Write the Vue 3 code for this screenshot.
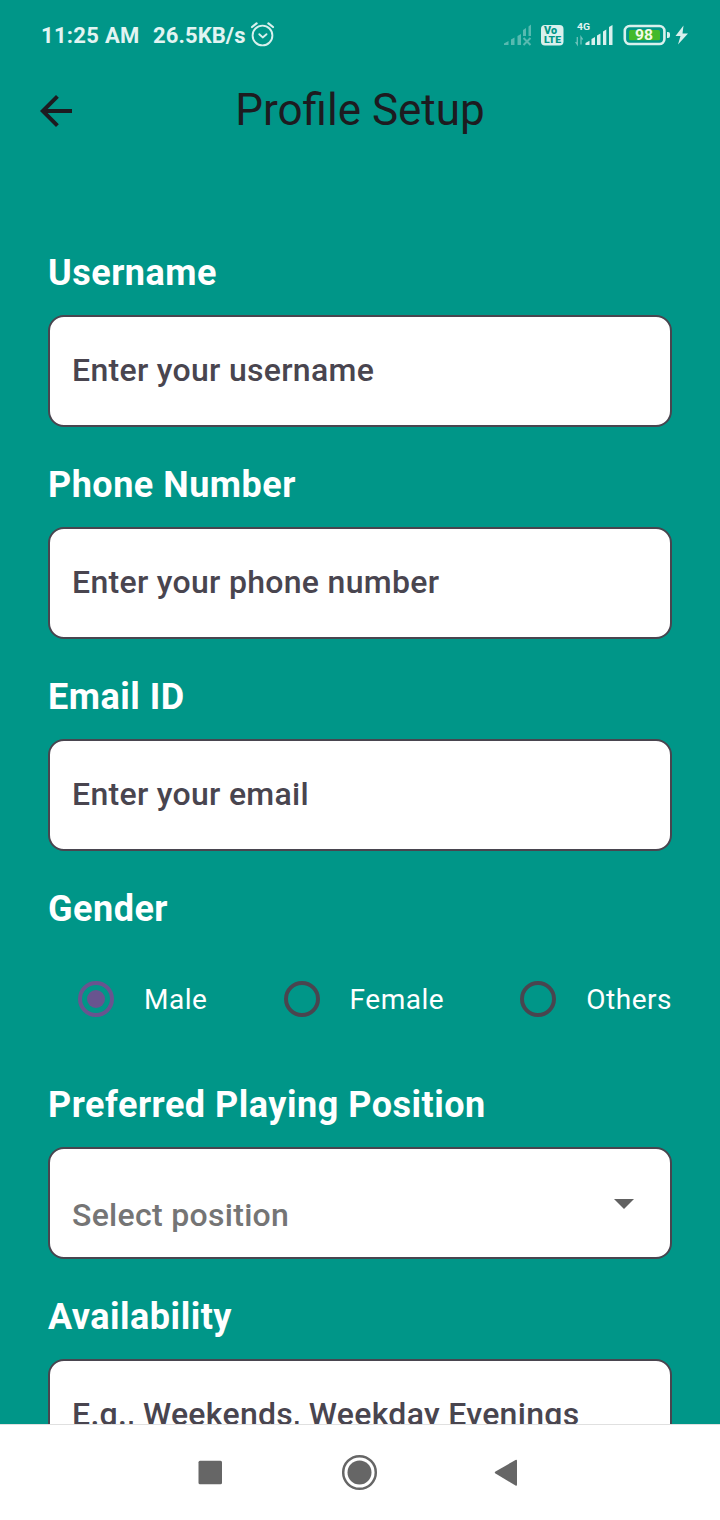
<script setup>
const fields = [
  { label: 'Username', hint: 'Enter your username' },
  { label: 'Phone Number', hint: 'Enter your phone number' },
  { label: 'Email ID', hint: 'Enter your email' },
]
const genders = ['Male', 'Female', 'Others']
const selected = 'Male'
</script>

<template>
  <div class="screen">
    <header class="status">
      <span class="clock">11:25 AM</span>
      <span class="speed">26.5KB/s</span>
      <svg class="alarm" width="26" height="26" viewBox="0 0 26 26" fill="none" stroke="#d9f0ed" stroke-width="1.9" stroke-linecap="round" stroke-linejoin="round">
        <circle cx="12.500" cy="14.500" r="9.900" />
        <path d="M9.300 13.200l3.400 3.200 3.800-3.200" />
        <path d="M2 6l4.600-3.600M23 6l-4.600-3.600" stroke-width="2.200" />
      </svg>
      <svg class="indicators" width="190" height="30" viewBox="500 20 190 30">
        <g fill="#d9f0ed" opacity=".4">
          <path d="M504 45v-1.500l4.500-2.500v4zM511 45v-5.500l3.500-2v7.500zM517.500 45v-9l3.500-2v11zM523 36v-6l3-2v8zM528.500 36v-9.500l2.500-2V36z" />
          <path d="M523.500 38l7 7M530.500 38l-7 7" stroke="#d9f0ed" stroke-width="2" />
        </g>
        <rect x="541" y="25" width="22.500" height="20.500" rx="4" fill="#d9f0ed" />
        <text x="544" y="34.200" class="vo" textLength="13" lengthAdjust="spacingAndGlyphs">Vo</text>
        <text x="544" y="43" class="lte" textLength="17" lengthAdjust="spacingAndGlyphs">LTE</text>
        <text x="577" y="30" class="net" textLength="13" lengthAdjust="spacingAndGlyphs">4G</text>
        <path d="M577.300 37v7.500l-1.700-2.500M581 44.500V37l1.700 2.500" stroke="#d9f0ed" stroke-width="1.300" fill="none" opacity=".5" />
        <path d="M585.500 45v-2l4-2.200V45zM591.500 45v-6l3.500-2v8zM597 45v-9.500l3.500-2V45zM603 45V31.500l3.300-2V45zM609 45V27l3.500-2v20z" fill="#d9f0ed" />
        <rect x="624.800" y="26" width="39.600" height="18" rx="5" fill="none" stroke="#d9f0ed" stroke-width="2.600" />
        <rect x="629" y="30" width="31" height="10.300" rx="1.500" fill="#43b92b" />
        <path d="M667 32h1q2 0 2 2v2q0 2-2 2h-1z" fill="#d9f0ed" />
        <text x="635" y="40.300" class="charge" textLength="18" lengthAdjust="spacingAndGlyphs">98</text>
        <path d="M683.500 25.500L675.500 36h5l-2.500 8.500L688 33.500h-5.500z" fill="#d9f0ed" />
      </svg>
    </header>

    <div class="appbar">
      <svg width="32" height="32" viewBox="0 0 16 16" fill="#1d1b20">
        <path d="M16 7H3.830l5.590-5.590L8 0 0 8l8 8 1.410-1.410L3.830 9H16V7z" />
      </svg>
      <h1>Profile Setup</h1>
    </div>

    <main class="form">
      <section v-for="f in fields" :key="f.label" class="field">
        <h2>{{ f.label }}</h2>
        <div class="box">{{ f.hint }}</div>
      </section>

      <section class="gender">
        <h2>Gender</h2>
        <div class="options">
          <div v-for="g in genders" :key="g" class="option">
            <span class="radio" :class="{ on: g === selected }"></span>
            <span>{{ g }}</span>
          </div>
        </div>
      </section>

      <section class="field">
        <h2>Preferred Playing Position</h2>
        <div class="box select">
          <span>Select position</span>
          <svg width="20" height="10" viewBox="0 0 20 10"><path d="M0 0h20L10 10z" fill="#616161" /></svg>
        </div>
      </section>

      <section class="field">
        <h2>Availability</h2>
        <div class="box">E.g., Weekends, Weekday Evenings</div>
      </section>
    </main>

    <nav class="navbar">
      <svg width="720" height="95" viewBox="0 1425 720 95" fill="#666">
        <rect x="198.500" y="1460.700" width="23.500" height="23.500" rx="1.500" />
        <circle cx="359.500" cy="1472.500" r="16.300" fill="none" stroke="#666" stroke-width="2.500" />
        <circle cx="359.500" cy="1472.500" r="12" />
        <path d="M495.500 1471.500L515.500 1460Q517 1459.300 517 1461V1484.500Q517 1486.200 515.500 1485.500L495.500 1473.500Q494 1472.500 495.500 1471.500z" />
      </svg>
    </nav>
  </div>
</template>

<style>
body { margin: 0; background: #009688; }
</style>

<style scoped>
.screen {
  width: 720px;
  height: 1520px;
  display: flex;
  flex-direction: column;
  overflow: hidden;
  background: #009688;
  font-family: Roboto, "Liberation Sans", sans-serif;
}
.status {
  height: 70px;
  flex: none;
  box-sizing: border-box;
  padding: 0 30px 0 41px;
  display: flex;
  align-items: center;
  color: #e2f4f2;
  font-size: 22px;
  font-weight: 700;
  white-space: nowrap;
}
.clock { width: 112px; letter-spacing: .3px; }
.speed { width: 97px; letter-spacing: .1px; }
.alarm { margin-bottom: 2px; }
.indicators { margin-left: auto; }
.vo, .lte { fill: #009688; font-weight: 900; }
.vo { font-size: 10px; }
.lte { font-size: 9.500px; }
.net { fill: #e2f4f2; font-size: 9.500px; font-weight: 700; }
.charge { fill: #f2fbe9; font-size: 15px; font-weight: 700; }
.appbar {
  height: 80px;
  flex: none;
  box-sizing: border-box;
  padding: 0 40px;
  display: grid;
  grid-template-columns: 32px 1fr 32px;
  align-items: center;
}
.appbar svg { margin-top: 2px; }
h1 {
  margin: 0;
  text-align: center;
  font-size: 44px;
  font-weight: 400;
  line-height: 56px;
  color: #1d1b20;
}
.form {
  flex: 1;
  min-height: 0;
  overflow: hidden;
  padding: 102px 48px 0;
}
h2 {
  margin: 0 0 20px;
  font-size: 36px;
  line-height: 43px;
  font-weight: 700;
  letter-spacing: .5px;
  color: #fff;
}
.field { height: 212px; }
.box {
  height: 112px;
  box-sizing: border-box;
  border: 2px solid #49454f;
  border-radius: 16px;
  background: #fff;
  padding: 0 22px 2px;
  display: flex;
  align-items: center;
  font-size: 32px;
  line-height: 48px;
  font-weight: 500;
  letter-spacing: .3px;
  color: #49454f;
}
.select { color: #757575; justify-content: space-between; padding-right: 36px; }
.select span { padding-top: 26px; }
.select svg { margin-top: 4px; }
.gender { height: 196px; }
.options {
  display: flex;
  justify-content: space-between;
  height: 96px;
}
.option {
  display: flex;
  align-items: center;
  color: #fff;
  font-size: 28px;
  letter-spacing: .5px;
}
.radio {
  width: 36px;
  height: 36px;
  margin: 0 30px;
  box-sizing: border-box;
  border: 4px solid #49454f;
  border-radius: 50%;
  display: grid;
  place-items: center;
}
.radio.on { border-color: #69548f; }
.radio.on::after {
  content: "";
  width: 18px;
  height: 18px;
  border-radius: 50%;
  background: #69548f;
}
.navbar {
  height: 95px;
  flex: none;
  background: #fff;
  border-top: 1px solid #e0e0e0;
}
.navbar svg { display: block; }
</style>
